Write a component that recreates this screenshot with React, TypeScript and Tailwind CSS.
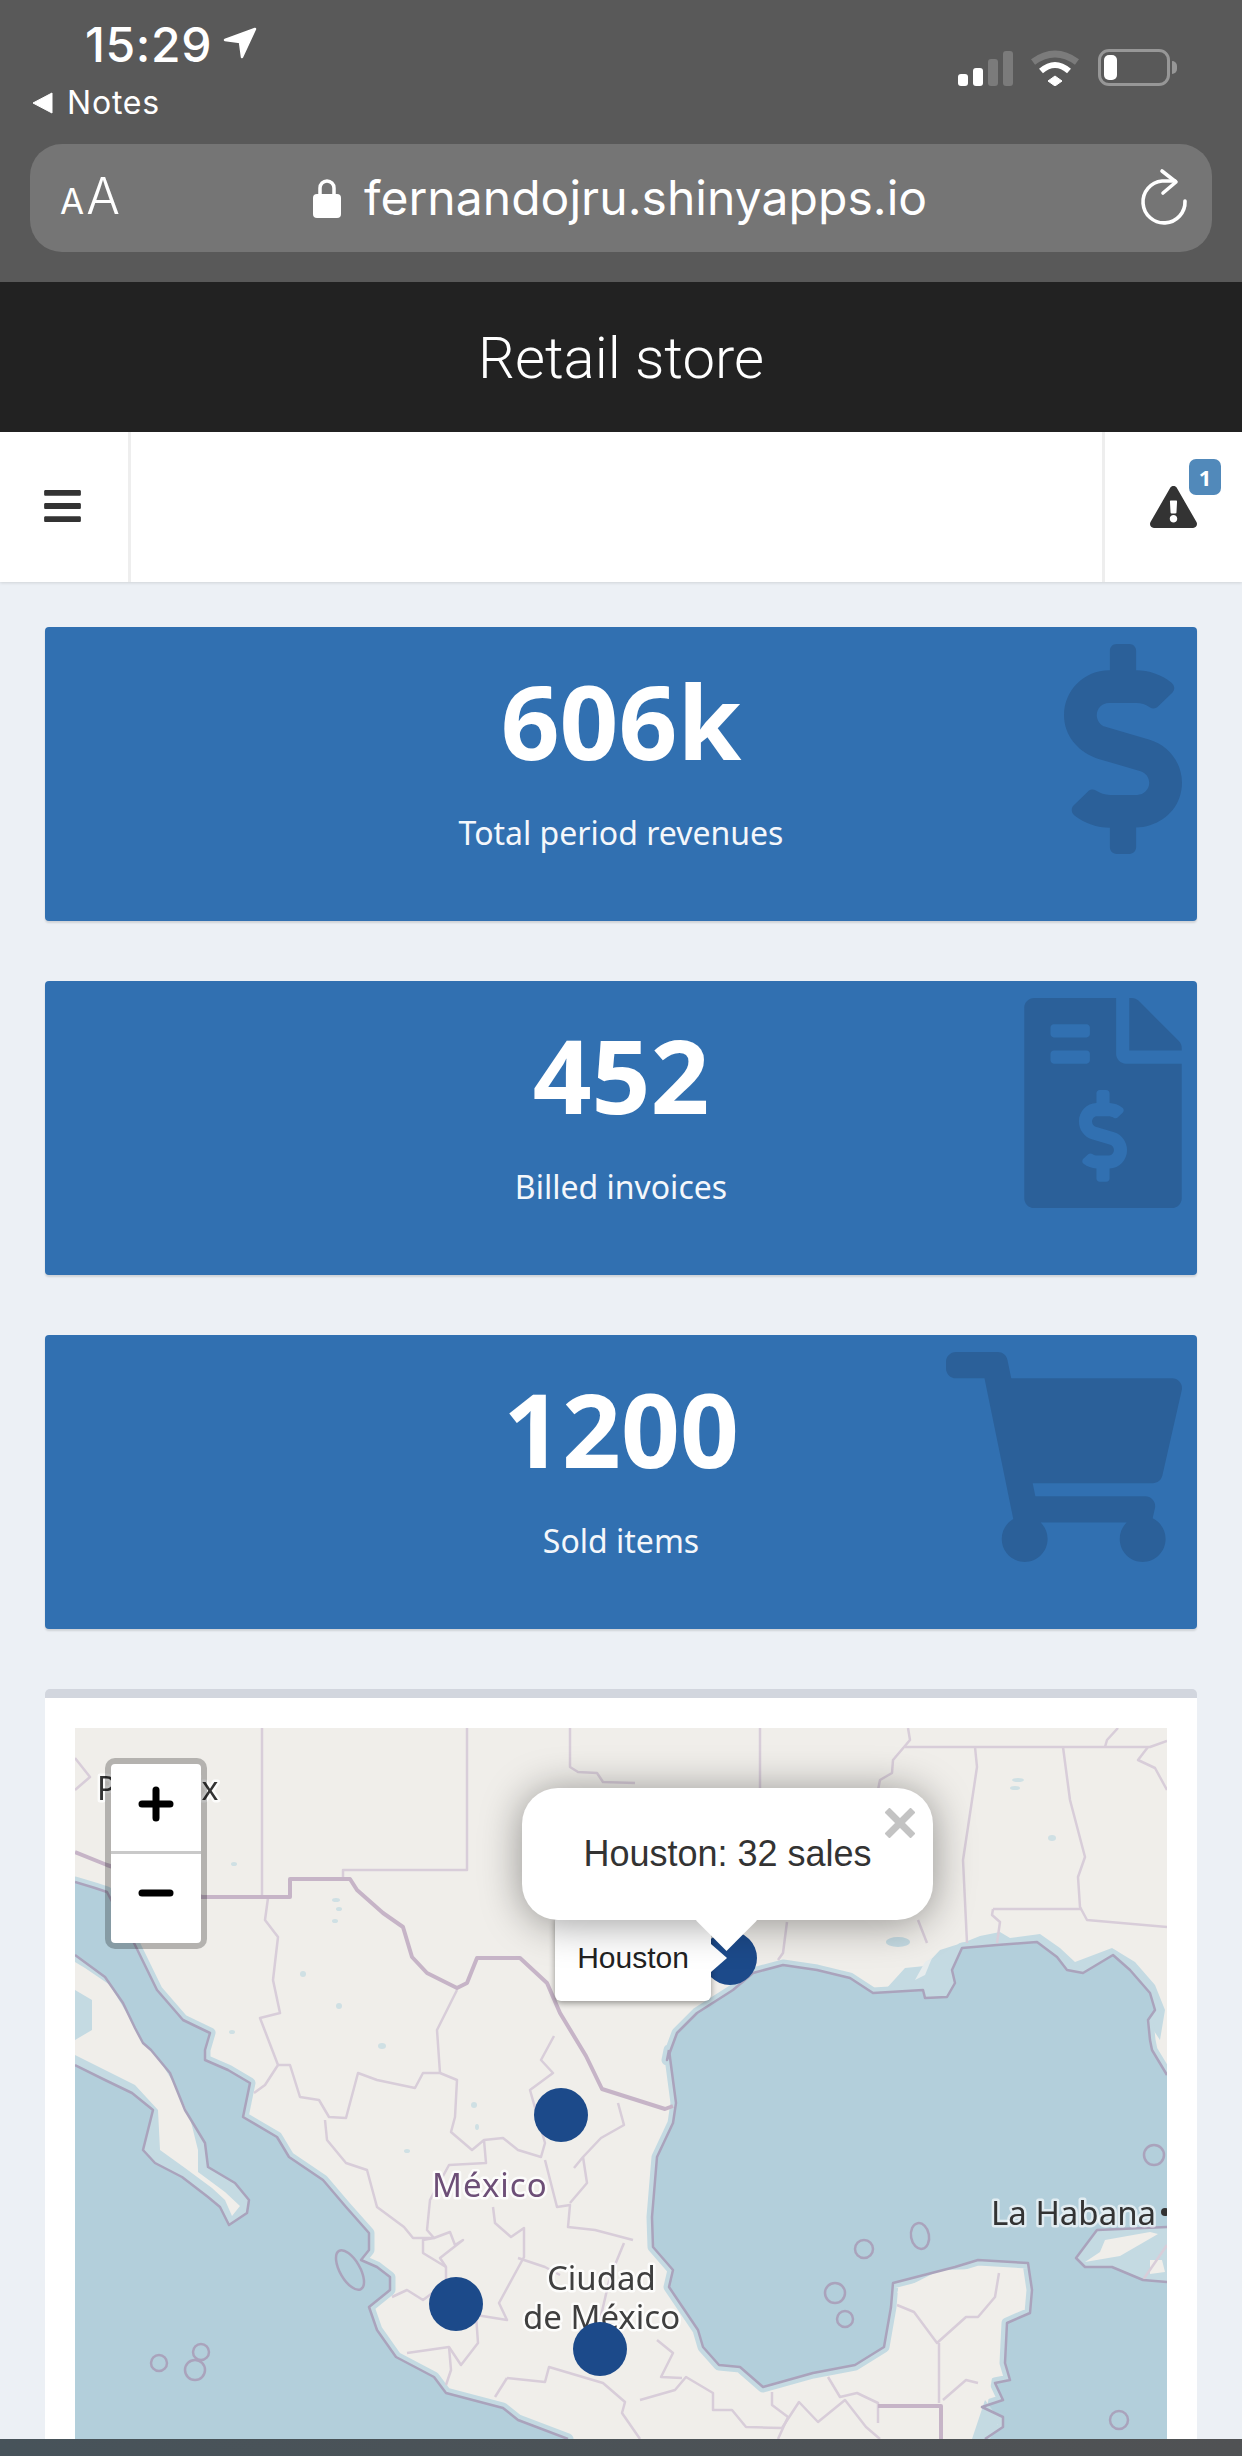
import React from "react";
import { FaBars, FaDollarSign, FaExclamationTriangle, FaFileInvoiceDollar, FaShoppingCart } from "react-icons/fa";

const pacificCoast =
  "M75 1882 L95 1888 L107 1892 L135 1945 L157 1990 L183 2020 L210 2033 L205 2050 L205 2060 L228 2070 L250 2083 L243 2117 L277 2137 L289 2157 L323 2180 L346 2207 L369 2233 L369 2250 L361 2260 L377 2267 L390 2277 L390 2290 L369 2307 L377 2330 L396 2357 L434 2377 L446 2393 L503 2408 L518 2420 L568 2439";
const pacificWater = pacificCoast + " L75 2439 Z";
const baja =
  "M75 1955 L105 1977 L123 2003 L135 2028 L143 2043 L151 2050 L170 2073 L185 2110 L205 2143 L208 2167 L235 2183 L249 2200 L247 2213 L229 2225 L220 2207 L208 2197 L182 2177 L155 2163 L143 2150 L153 2110 L132 2093 L105 2080 L75 2065";
const gulfNorth =
  "M669 2050 L667 2060 L677 2033 L697 2013 L733 1990 L753 1973 L783 1965 L817 1970 L850 1978 L873 1993 L923 1990 L925 1998 L947 1997 L955 1983 L952 1970 L962 1948 L997 1945 L1037 1942 L1057 1957 L1067 1970 L1083 1973 L1113 1955 L1130 1970 L1150 1993 L1155 2010 L1148 2020 L1150 2040 L1152 2050 L1167 2075";
const gulfSouth =
  "M985 2439 L1003 2427 L1003 2417 L982 2407 L1003 2400 L995 2383 L1010 2380 L1005 2363 L1007 2323 L1030 2313 L1032 2290 L1028 2263 L978 2260 L955 2267 L893 2283 L891 2307 L884 2347 L855 2365 L813 2373 L763 2387 L740 2367 L719 2365 L703 2347 L698 2330 L669 2287 L673 2270 L653 2247 L652 2217 L657 2157 L673 2123 L676 2103 L669 2050";
const gulfWater = gulfNorth + " L1167 2439 L985 2439" + gulfSouth.slice(10) + " Z";
const cuba = "M1167 2282 L1143 2280 L1112 2267 L1085 2267 L1076 2258 L1097 2230 L1167 2227";

const strongBorders = [
  "M75 1852 L107 1865 L202 1897 L290 1897 L290 1879 L350 1879 L357 1890 L383 1913 L403 1927 L412 1957 L427 1973 L457 1988 L467 1983 L477 1958 L520 1958 L547 1983 L560 2013 L586 2056 L602 2089 L665 2109 L673 2106",
  "M878 2406 L941 2406 L941 2439",
];
const thinBorders = [
  "M262 1728 L262 1897",
  "M467 1728 L467 1870 L343 1870 L343 1879",
  "M570 1728 L570 1767 L578 1772 L597 1773 L603 1782 L635 1783",
  "M760 1728 L760 1790",
  "M787 1922 L783 1953 L778 1960",
  "M908 1728 L910 1740 L893 1760 L892 1773 L880 1780 L878 1790",
  "M905 1747 L1150 1747 L1167 1741",
  "M975 1747 L977 1767 L968 1827 L963 1860 L967 1943",
  "M1063 1747 L1070 1800 L1085 1857 L1078 1877 L1080 1907 L1087 1920 L1167 1927",
  "M993 1909 L1082 1909 M993 1909 L992 1915 L1000 1922 L997 1943",
  "M1105 1747 L1107 1740 L1118 1728",
  "M1148 1747 L1138 1760 L1155 1768 L1167 1790",
  "M918 1920 L927 1943",
  "M75 1758 L90 1777 L75 1790",
  "M268 1898 L265 1920 L278 1937 L273 1980 L280 2013 L260 2018 L278 2065 L265 2085 L254 2093",
  "M278 2065 L290 2065 L300 2097 L319 2100 L329 2117 L346 2118 L358 2073 L377 2080 L415 2088 L423 2073 L440 2073 L457 2080 L455 2117 L451 2132 L472 2150 L484 2140 L503 2138 L518 2150 L541 2157 L545 2143 L530 2090 L553 2073 L541 2060 L554 2036",
  "M457 1990 L437 2030 L440 2073",
  "M325 2120 L327 2140 L346 2163 L367 2170 L377 2207 L404 2227 L413 2238 L434 2238 L423 2240 L423 2253 L446 2267 L446 2283 L423 2300 L407 2290 L392 2297",
  "M484 2140 L486 2163 L449 2165 L430 2200 L427 2230 L434 2238 L450 2232 L455 2245 L463 2240 L440 2258 L446 2267",
  "M545 2160 L557 2207 L570 2205 L568 2227 L595 2230 L633 2240",
  "M583 2157 L587 2183 L570 2203",
  "M618 2103 L624 2125 L601 2138 L583 2157 L574 2168",
  "M493 2207 L495 2223 L511 2237 L524 2228 L524 2257 L499 2303 L507 2320 L476 2315 L478 2343 L461 2365 L449 2347 L407 2353",
  "M518 2258 L545 2267 L560 2275",
  "M449 2347 L451 2370 L446 2385",
  "M507 2378 L545 2382 L549 2367 L603 2383 L625 2402 L622 2413 L640 2439",
  "M507 2378 L495 2397",
  "M640 2400 L675 2390 L686 2377 L713 2393 L713 2410 L732 2410 L746 2427 L782 2428 L799 2402 L818 2422 L845 2400 L866 2427 L880 2439",
  "M772 2392 L772 2405 L788 2417 L778 2439",
  "M828 2377 L840 2397 L857 2393 L878 2403 L878 2423",
  "M897 2305 L914 2312 L937 2343 L966 2317 L978 2317 L995 2297 L999 2273",
  "M939 2343 L939 2403",
  "M943 2400 L966 2380 L978 2383",
  "M657 2340 L673 2353 L661 2377 L682 2378",
  "M624 2243 L610 2277 L600 2320",
  "M1167 2245 L1143 2280",
];
const lakes: [number, number, number, number][] = [
  [234, 1864, 3, 2], [336, 1900, 4, 2], [339, 1909, 3, 2], [335, 1921, 3, 2],
  [303, 1974, 3, 3], [339, 2006, 3, 3], [382, 2046, 4, 3], [232, 2032, 3, 2], [474, 2105, 3, 3],
  [477, 2127, 2, 3], [407, 2151, 3, 2], [1052, 1838, 4, 3], [1018, 1780, 6, 2], [1015, 1788, 5, 2],
];
const islands: [number, number, number, number, number][] = [
  [159, 2363, 8, 8, 0], [201, 2352, 8, 8, 0], [195, 2370, 10, 10, 0], [350, 2270, 10, 22, -30],
  [1154, 2155, 10, 10, 0], [920, 2236, 9, 13, -10], [864, 2249, 9, 9, 0], [835, 2293, 10, 10, 0],
  [845, 2319, 8, 8, 0], [1119, 2420, 9, 9, 0],
];
const markers: [number, number][] = [[561, 2115], [456, 2304], [600, 2349], [730, 1958]];

function MapArt() {
  return (
    <>
      <svg viewBox="75 1728 1092 711" className="absolute inset-0 h-full w-full blur-[0.6px]">
        <rect x="70" y="1720" width="1104" height="725" fill="#f0eeea" />
        <g fill="#c4dae2">
          <path d="M885 1990 L905 1968 L925 1966 L940 1950 L965 1942 L980 1936 L1000 1932 L1010 1938 L1040 1934 L1060 1948 L1075 1962 L1112 1948 L1135 1962 L1155 1985 L1165 2010 L1160 2040 L1140 2010 L1100 1990 L1000 2010 L900 2010 Z" />
          <ellipse cx="898" cy="1942" rx="12" ry="5" />
        </g>
        <path d="M925 1962 L932 1958 L925 1975 L915 1980 Z" fill="#e6eced" />
        <g fill="none" stroke="#c4dae2" strokeWidth="11" strokeLinejoin="round">
          <path d={pacificWater} />
          <path d={gulfWater} />
        </g>
        <path d={pacificWater} fill="#b3cfdb" />
        <path d={gulfWater} fill="#b3cfdb" />
        <path d={baja + " Z"} fill="#c4dae2" />
        <path d="M85 1968 L110 1985 L128 2015 L145 2045 L158 2058 L175 2085 L190 2118 L198 2150 L198 2172 L225 2192 L240 2206 L232 2216 L225 2200 L212 2188 L185 2168 L160 2150 L158 2110 L135 2085 L105 2070 L75 2055 L75 2040 L92 2030 L92 2000 L75 1990 L75 1962 Z" fill="#f0eeea" />
        <path d={cuba + " Z"} fill="#c4dae2" />
        <path d="M1105 2240 L1150 2232 L1158 2234 L1120 2256 L1085 2262 L1100 2252 Z" fill="#f0eeea" />
        <path d="M1150 2260 L1162 2260 L1165 2272 L1150 2274 Z" fill="#f0eeea" />
        <path d="M940 2270 L1018 2268 L1020 2290 L1000 2320 L995 2360 L985 2420 L978 2439 L930 2439 L941 2380 L930 2330 L905 2300 L897 2292 Z" fill="#f0eeea" />
        <path d="M985 2400 L1000 2420 L990 2439 L972 2439 Z" fill="#c4dae2" />
        <g fill="#cfe0e4">
          {lakes.map(([cx, cy, rx, ry], i) => (
            <ellipse key={i} cx={cx} cy={cy} rx={rx} ry={ry} />
          ))}
        </g>
        <g fill="none" stroke="#d8cdd9" strokeWidth="2.5" strokeLinejoin="round">
          {thinBorders.map((d, i) => (
            <path key={i} d={d} />
          ))}
        </g>
        <g fill="none" stroke="#c6b4c7" strokeWidth="4" strokeLinejoin="round">
          {strongBorders.map((d, i) => (
            <path key={i} d={d} />
          ))}
        </g>
        <g fill="none" stroke="#aaa3bc" strokeWidth="2.5" strokeLinejoin="round">
          <path d={pacificCoast} />
          <path d={baja} />
          <path d={gulfNorth} />
          <path d={gulfSouth} />
          <path d={cuba} />
          {islands.map(([cx, cy, rx, ry, rot], i) => (
            <ellipse key={i} cx={cx} cy={cy} rx={rx} ry={ry} transform={`rotate(${rot} ${cx} ${cy})`} />
          ))}
        </g>
        <g fontFamily="'Noto Sans', sans-serif" fontSize="33" strokeLinejoin="round" paintOrder="stroke">
          <text x="97" y="1800" fontSize="32" fill="#333" stroke="#ffffff" strokeOpacity="0.8" strokeWidth="5">Phoenix</text>
          <text x="432" y="2197" fill="#6d4f77" stroke="#ffffff" strokeOpacity="0.8" strokeWidth="5" letterSpacing="1">México</text>
          <text x="547" y="2290" fill="#3f3f3f" stroke="#ffffff" strokeOpacity="0.8" strokeWidth="5">Ciudad</text>
          <text x="523" y="2329" fill="#3f3f3f" stroke="#ffffff" strokeOpacity="0.8" strokeWidth="5">de México</text>
          <text x="991" y="2225" fill="#333" stroke="#ffffff" strokeOpacity="0.6" strokeWidth="5">La Habana</text>
        </g>
        <circle cx="1165" cy="2212" r="4" fill="#333" />
      </svg>
      <svg viewBox="75 1728 1092 711" className="absolute inset-0 h-full w-full">
        <g fill="#1c4a8a">
          {markers.map(([cx, cy], i) => (
            <circle key={i} cx={cx} cy={cy} r="27" />
          ))}
        </g>
      </svg>
    </>
  );
}

function StatCard({ value, label, icon }: { value: string; label: string; icon: React.ReactNode }) {
  return (
    <div className="relative flex h-[294px] flex-col items-center rounded-[4px] bg-[#3170b1] pt-[38px] text-white shadow-[0_2px_2px_rgba(0,0,0,0.12)]">
      <div className="text-[103px] leading-[110px] font-bold [font-family:'Noto_Sans',sans-serif]">{value}</div>
      <div className="mt-[36px] text-[32px] leading-[44px] text-[#f4f7fb] [font-family:'Noto_Sans',sans-serif]">{label}</div>
      <div className="absolute top-[17px] right-[15px] text-[#2b6099]">{icon}</div>
    </div>
  );
}

export default function App() {
  return (
    <div className="relative h-[2456px] w-[1242px] overflow-hidden bg-[#ecf0f5] [font-family:'Liberation_Sans',sans-serif]">
      {/* iOS chrome */}
      <div className="flex h-[282px] flex-col bg-[#595959] text-white [font-family:Inter,sans-serif]">
        <div className="flex h-[144px] items-start justify-between">
          <div className="flex flex-col pl-[32px]">
            <div className="mt-[16px] flex items-center pl-[53px]">
              <span className="text-[48px] leading-[58px] font-medium tracking-[0.6px]">15:29</span>
              <svg viewBox="0 0 34 32" className="mt-[-4px] ml-[11px] h-[32px] w-[34px]" fill="#fff" stroke="#fff" strokeWidth="2.5" strokeLinejoin="round">
                <path d="M2 13 L32 2 L19 30 L17 15 Z" />
              </svg>
            </div>
            <div className="mt-[10px] flex items-center">
              <svg viewBox="0 0 22 22" className="h-[22px] w-[22px]" fill="#fff" stroke="#fff" strokeWidth="1" strokeLinejoin="round">
                <path d="M1 11 L20 1 L20 21 Z" />
              </svg>
              <span className="ml-[13px] text-[32px] leading-[38px] font-normal tracking-[0.8px]">Notes</span>
            </div>
          </div>
          <div className="mt-[49px] mr-[65px] flex items-end">
            <div className="flex items-end gap-[5px]">
              <div className="h-[12px] w-[10px] rounded-[3px] bg-white" />
              <div className="h-[18px] w-[10px] rounded-[3px] bg-white" />
              <div className="h-[27px] w-[10px] rounded-[3px] bg-[#7b7b7b]" />
              <div className="h-[35px] w-[10px] rounded-[3px] bg-[#7b7b7b]" />
            </div>
            <svg viewBox="0 0 48 36" className="ml-[18px] h-[36px] w-[48px]" fill="none">
              <path d="M2 12 Q24 -4 46 12" stroke="#7b7b7b" strokeWidth="7" />
              <path d="M10 21 Q24 9 38 21" stroke="#fff" strokeWidth="6" />
              <path d="M17 31 L24 26 L31 31 L24 36 Z" fill="#fff" stroke="#fff" strokeLinejoin="round" />
            </svg>
            <div className="ml-[19px] flex items-center">
              <div className="flex h-[37px] w-[72px] items-center rounded-[11px] border-[3px] border-[#979797] pl-[3px]">
                <div className="h-[25px] w-[13px] rounded-[5px] bg-white" />
              </div>
              <div className="ml-[2px] h-[13px] w-[5px] rounded-r-full bg-[#979797]" />
            </div>
          </div>
        </div>
        <div className="relative mx-[30px] flex h-[108px] items-center justify-between rounded-[32px] bg-[#757575] pr-[21px] pl-[30px]">
          <div className="flex items-baseline">
            <span className="text-[35px] leading-[50px] font-normal">A</span>
            <span className="ml-[2px] text-[50px] leading-[50px] font-light">A</span>
          </div>
          <div className="absolute top-0 left-[283px] flex h-full items-center">
            <svg viewBox="0 0 28 39" className="h-[39px] w-[28px]">
              <rect x="0" y="15" width="28" height="24" rx="4" fill="#fff" />
              <path d="M7 17 V9 a7 7 0 0 1 14 0 V17" fill="none" stroke="#fff" strokeWidth="3.5" />
            </svg>
            <span className="ml-[23px] text-[48px] leading-[60px] tracking-[0.05px]">fernandojru.shinyapps.io</span>
          </div>
          <svg viewBox="0 0 54 62" className="h-[62px] w-[54px]" fill="none" stroke="#fff" strokeWidth="3.6" strokeLinecap="round" strokeLinejoin="round">
            <path d="M48 34 A21 21 0 1 1 25 14 H38" />
            <path d="M25 4 L39 15 L26 26" />
          </svg>
        </div>
      </div>

      {/* App title */}
      <div className="flex h-[150px] items-center justify-center bg-[#222222] pt-[2px] text-[58px] leading-[60px] font-light text-white [font-family:Roboto,sans-serif]">
        Retail store
      </div>

      {/* Navbar */}
      <div className="flex h-[150px] items-stretch justify-between bg-white shadow-[0_1px_3px_rgba(0,0,0,0.12)]">
        <div className="flex w-[131px] items-center justify-center border-r-[3px] border-[#eeeeee] pr-[3px] text-[#333]">
          <FaBars className="mt-[-2px] h-[42px] w-[37px]" />
        </div>
        <div className="relative flex w-[140px] items-center justify-center border-l-[3px] border-[#eeeeee] text-[#333]">
          <FaExclamationTriangle className="mr-[1px] h-[42px] w-[47px]" />
          <span className="absolute top-[27px] right-[21px] flex h-[36px] w-[32px] items-center justify-center rounded-[7px] bg-[#5189ba] text-[22px] font-bold text-white [font-family:'Noto_Sans',sans-serif]">
            1
          </span>
        </div>
      </div>

      {/* Content */}
      <div className="flex flex-col gap-[60px] px-[45px] pt-[45px]">
        <StatCard value="606k" label="Total period revenues" icon={<FaDollarSign className="h-[210px] w-[118px]" />} />
        <StatCard value="452" label="Billed invoices" icon={<FaFileInvoiceDollar className="h-[210px] w-[158px]" />} />
        <StatCard value="1200" label="Sold items" icon={<FaShoppingCart className="h-[210px] w-[236px]" />} />
        <div className="rounded-t-[5px] border-t-[9px] border-[#d2d6de] bg-white px-[30px] pt-[30px]">
          <div className="relative h-[711px] overflow-hidden bg-[#f0eeea]">
            <MapArt />

            {/* Zoom control */}
            <div className="absolute top-[30px] left-[30px] flex h-[191px] w-[102px] flex-col rounded-[10px] border-[6px] border-black/25 bg-white bg-clip-padding text-black">
              <div className="flex h-[90px] items-start justify-center border-b-[3px] border-[#c9c9c9] pt-[22px]">
                <svg viewBox="0 0 36 36" className="h-[36px] w-[36px]" stroke="#000" strokeWidth="7" strokeLinecap="round">
                  <path d="M18 4 V32 M4 18 H32" />
                </svg>
              </div>
              <div className="flex flex-1 items-start justify-center pt-[21px]">
                <svg viewBox="0 0 36 36" className="h-[36px] w-[36px]" stroke="#000" strokeWidth="7" strokeLinecap="round">
                  <path d="M4 18 H32" />
                </svg>
              </div>
            </div>

            {/* Marker tooltip */}
            <div className="absolute top-[187px] left-[480px] flex h-[86px] w-[156px] items-center justify-center rounded-[6px] bg-white pb-[1px] text-[30px] leading-[36px] text-[#222] shadow-[0_2px_6px_rgba(0,0,0,0.4)]">
              Houston
            </div>
            <div className="absolute top-[216px] left-[636px] h-0 w-0 border-y-[14px] border-l-[16px] border-y-transparent border-l-white" />

            {/* Popup */}
            <div className="absolute top-[60px] left-[447px] flex h-[132px] w-[411px] items-start justify-center rounded-[36px] bg-white pt-[44px] text-[36px] leading-[44px] text-[#333] shadow-[0_3px_42px_rgba(0,0,0,0.4)]">
              Houston: 32 sales
              <svg viewBox="0 0 30 30" className="absolute top-[20px] right-[18px] h-[30px] w-[30px]" stroke="#c3c3c3" strokeWidth="7">
                <path d="M2 2 L28 28 M28 2 L2 28" />
              </svg>
            </div>
            <div className="absolute top-[171px] left-[630px] h-[43px] w-[43px] rotate-45 bg-white" />
          </div>
        </div>
      </div>

      {/* Home indicator strip */}
      <div className="absolute right-0 bottom-0 left-0 h-[17px] bg-gradient-to-r from-[#47535a] to-[#505254]" />
    </div>
  );
}
